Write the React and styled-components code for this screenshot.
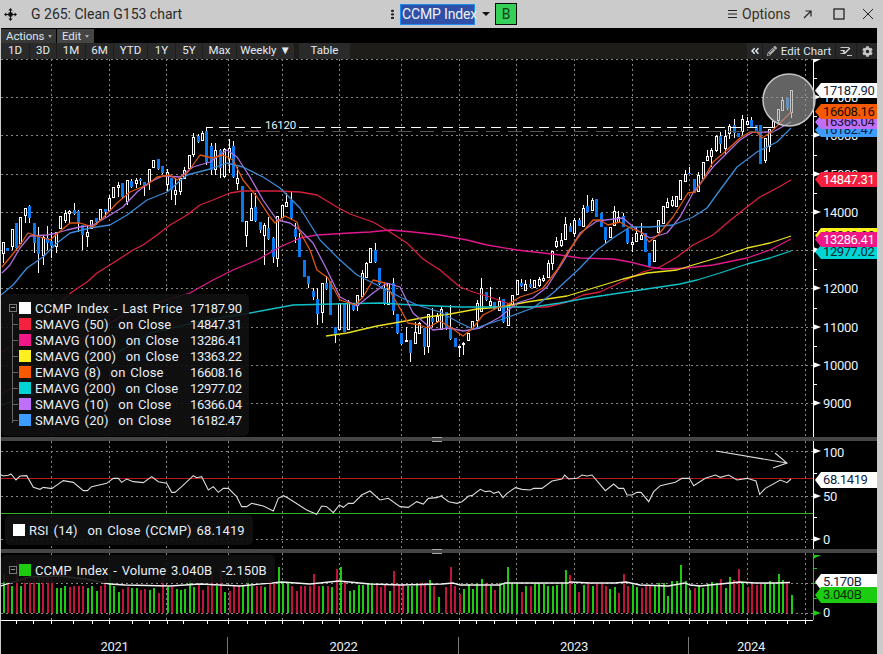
import React from 'react';
import styled, { createGlobalStyle } from 'styled-components';
import { FaCog, FaPencilAlt, FaAngleDoubleLeft } from 'react-icons/fa';

const GlobalStyle = createGlobalStyle`
    html, body { margin: 0; padding: 0; background: #cbcbcb; }
    * { box-sizing: border-box; }
`;

const FONT = `Roboto, "Liberation Sans", Arial, sans-serif`;

// candles traced from the picture: [bodyTop, bodyBottom, high, low, up]
const traceA = [
    [397,430,397,460,1],[413,423,413,423,0],[358,408,358,420,1],[340,415,340,420,0],[322,400,322,400,1],
    [295,315,295,340,1],[288,325,285,340,0],[340,400,340,430,0],[375,433,350,488,0],[382,435,375,465,1],
    [385,400,348,420,0],[393,408,365,445,0],[368,410,368,428,1],[320,355,320,355,1],[310,330,300,340,1],
    [303,310,300,340,1],[300,312,280,315,0],[303,340,300,365,0],[345,375,345,420,0],[367,380,345,410,1],
    [330,355,330,358,1],[325,335,325,345,0],[298,328,298,330,1],[298,306,298,320,0],[265,302,255,305,1],
    [232,262,232,262,1],[227,233,215,262,1],[218,262,218,265,0],[212,275,212,285,1],[212,232,208,235,0],
    [212,220,205,235,1],[208,212,205,225,0],[217,228,217,258,0],[177,218,177,240,1],[150,172,150,172,1],
    [146,178,146,180,0],[167,190,167,192,0],[188,222,178,245,1],[205,240,205,270,0],[240,252,205,285,1],
    [205,245,200,255,1],[182,205,170,208,1],[135,175,135,180,1],[82,132,70,140,1],[78,95,72,100,0],
    [70,90,62,92,1],[63,155,63,165,0],[108,180,100,195,0],[122,178,98,195,1],[120,175,118,205,0],
    [118,200,115,205,1],[115,145,88,190,1],[108,200,92,205,0],[205,220,170,240,1],[228,335,228,335,0],
    [335,375,335,410,1],[295,330,250,333,1],[292,333,250,335,0],[335,360,335,370,0],[345,375,340,465,1],
    [355,387,320,390,0],[385,440,380,458,0],[320,445,320,470,1],[285,322,285,322,1],[278,290,248,292,1],
    [270,325,245,330,0],[357,382,340,400,0],[385,440,370,440,0],
];

const traceB = [
    [210,260,210,262,0],[258,282,258,293,0],[303,322,295,330,0],[327,372,295,405,0],[280,368,280,398,1],
    [280,297,258,300,0],[272,375,272,375,0],[412,435,412,458,0],[340,417,340,420,1],[342,425,342,425,0],
    [338,418,330,420,1],[345,360,340,362,0],[315,345,315,362,1],[250,318,240,320,1],[220,262,215,265,1],
    [175,218,175,220,1],[180,217,158,220,0],[235,282,235,285,0],[295,342,275,345,0],[280,342,280,345,1],
    [280,362,265,375,0],[372,430,372,432,0],[430,462,430,464,0],[450,453,410,455,1],[450,490,450,515,0],
    [427,460,395,462,1],[400,430,395,432,1],[415,472,415,495,0],[372,468,372,490,1],[383,395,355,410,0],
    [380,395,370,400,1],[358,418,350,420,1],[367,418,367,420,0],[415,447,345,449,0],[445,470,445,472,0],
    [470,473,470,500,1],[460,462,455,495,1],[430,452,430,454,1],[395,418,395,420,1],[340,390,330,410,1],
    [295,365,265,367,1],[307,330,307,332,0],[335,345,290,350,1],[335,357,335,359,0],[333,360,320,362,1],
    [328,397,328,399,0],[340,407,340,409,1],[315,342,315,344,1],[270,312,270,314,1],[280,288,268,290,0],
    [284,302,270,304,1],[283,292,268,294,0],[270,292,270,294,1],[268,285,262,290,1],[265,272,255,275,1],
    [220,262,210,264,1],[183,220,183,240,1],[153,170,140,175,1],[150,165,130,170,1],[103,147,82,150,1],
    [108,125,100,127,0],[90,130,85,140,1],[90,107,85,109,0],[55,110,45,112,1],[47,65,15,67,0],
    [30,60,25,62,1],[27,80,27,82,0],
];

const traceC = [
    [308,350,308,352,0],[350,390,350,400,0],[353,383,353,385,1],[303,345,288,347,1],[322,338,303,340,1],
    [317,350,308,352,0],[358,400,358,402,0],[397,403,380,425,1],[370,395,350,397,1],[375,388,340,390,1],
    [368,425,368,427,0],[428,468,428,470,0],[392,453,392,455,1],[330,368,330,370,1],[290,340,290,342,1],
    [278,293,265,295,1],[270,285,258,290,1],[260,290,260,292,1],[212,268,212,270,1],[193,215,180,217,1],
    [190,191,172,192,0],[208,248,208,250,0],[195,243,185,245,1],[157,205,157,207,1],[140,150,120,152,1],
    [120,140,115,170,1],[78,122,75,125,1],[78,103,65,130,0],[78,115,60,135,1],[48,70,42,88,1],
    [45,68,28,85,0],[68,80,68,82,0],[28,65,15,75,1],[33,42,20,44,1],[30,50,20,52,0],
    [45,65,45,67,0],[45,162,45,162,0],[85,150,85,160,1],[58,110,58,125,1],[35,53,35,55,1],
    [-3,30,-3,45,1],[-30,0,-39,2,1],[-37,-6,-37,0,0],[-60,6,-60,24,1],
];

const toCandle = (offset) => ([top, bottom, high, low, up]) => ({
    top: offset + top / 3,
    bottom: offset + bottom / 3,
    high: offset + high / 3,
    low: offset + low / 3,
    up: !!up,
});

const candles = [
    ...traceA.map(toCandle(110)),
    ...traceB.map(toCandle(190)),
    ...traceC.map(toCandle(110)),
].map((c, i) => ({ ...c, x: Math.round(2.67 + i * 4.43) }));

const series = [
    { color: '#d8203c', points: '2,352 27,337 53,310 72,292 87,282 97,273 113,263 133,250 143,245 157,235 170,225 187,215 200,205 213,200 230,193 243,191 277,191 300,192 317,195 337,207 350,214 373,222 390,232 407,243 423,259 440,270 460,287 473,292 490,297 507,303 517,307 547,307 567,302 583,295 600,292 630,278 643,272 660,267 677,257 693,245 713,235 727,223 743,210 760,197 777,188 791,180' },
    { color: '#e0188c', points: '2,393 20,385 43,370 67,347 97,330 133,310 190,293 213,280 233,270 257,260 280,247 300,238 317,235 350,233 370,232 390,230 413,232 440,235 467,240 487,245 517,250 560,255 580,258 613,259 630,262 650,267 663,269 687,268 713,265 747,258 770,250 791,239' },
    { color: '#e8e020', points: '326,336 347,333 377,326 400,322 427,317 450,314 477,309 500,307 527,302 567,296 600,286 623,279 647,273 677,270 693,265 720,257 747,248 770,243 791,236' },
    { color: '#10c0c8', points: '2,405 40,392 73,375 117,353 150,333 207,320 250,313 293,305 333,304 380,303 413,305 460,307 500,307 533,307 560,303 587,298 600,296 680,284 697,280 720,273 747,264 770,258 791,251' },
    { color: '#b070e0', points: '2,273 10,265 20,248 30,236 47,235 57,233 67,230 80,227 93,225 107,217 123,207 137,192 150,182 163,176 180,177 193,167 210,162 227,150 237,157 250,177 263,200 277,220 290,223 300,230 313,243 327,270 340,297 357,306 373,293 387,283 400,287 413,313 433,330 450,328 463,331 480,328 500,317 517,303 533,298 547,287 563,262 580,233 597,221 623,218 637,230 650,238 667,233 680,217 693,193 713,167 727,153 740,140 753,132 773,132 791,122' },
    { color: '#3a8ad8', points: '1,295 13,285 27,268 43,257 57,243 70,233 90,228 110,225 127,215 147,200 167,192 187,175 210,169 227,163 243,167 263,177 280,188 300,208 320,240 340,260 357,275 377,285 400,297 417,305 440,312 460,323 473,329 500,320 533,308 553,293 580,268 597,250 613,238 630,227 650,227 673,225 693,217 707,208 720,190 737,167 757,152 777,142 791,128' },
    { color: '#e05510', points: '2,267 12,255 20,245 28,233 37,236 50,240 58,233 70,223 80,223 93,227 103,218 117,203 130,192 147,185 157,177 170,175 177,180 188,172 200,155 212,158 223,155 233,160 243,180 257,197 270,217 275,223 285,216 297,222 300,232 310,250 317,270 328,278 340,300 355,305 363,297 373,280 385,283 397,303 408,323 420,325 427,328 440,321 450,327 463,336 473,328 483,315 497,308 507,305 520,297 533,293 543,288 557,270 567,253 580,235 593,220 600,220 608,225 620,222 630,228 643,233 649,242 658,235 673,217 688,193 695,192 703,180 713,162 727,150 740,138 750,132 757,132 762,138 770,133 780,123 791,112' },
];

const rsiLeft = [[0,133],[10,138],[25,136],[33,132],[48,150],[60,138],[80,137],[100,172],[120,178],[130,172],[155,176],[190,152],[220,157],[250,182],[262,182],[275,170],[320,160],[340,145],[355,145],[365,157],[380,147],[400,155],[430,158],[455,140],[475,155],[500,160],[515,187],[525,187],[545,170],[580,137],[590,143],[605,140],[625,180],[640,170],[655,187],[670,175],[685,175],[710,200],[725,230],[740,230],[755,220],[790,228],[820,243],[835,205],[850,197],[865,205],[920,240],[950,253],[965,228],[980,230],[1000,248],[1018,225],[1030,232],[1045,220],[1060,220],[1085,195],[1110,183],[1140,210],[1165,205],[1200,230],[1225,232],[1250,215],[1270,222],[1285,205],[1310,203],[1326,197]];
const rsiRight = [[0,200],[20,215],[45,220],[60,215],[80,198],[90,197],[115,178],[130,185],[145,183],[155,190],[170,185],[183,203],[195,190],[220,173],[240,178],[265,180],[275,175],[300,175],[330,153],[360,147],[368,135],[380,147],[405,145],[420,135],[435,138],[450,135],[490,182],[515,162],[530,175],[545,175],[555,195],[570,195],[585,187],[597,187],[620,215],[635,185],[655,167],[700,157],[720,145],[742,145],[755,167],[790,145],[820,135],[835,142],[860,135],[885,150],[915,145],[942,153],[953,193],[970,175],[1015,150],[1035,158],[1047,147]];
const rsiPoints = [
    ...rsiLeft.map(([x, y]) => `${x / 3},${430 + y / 3}`),
    ...rsiRight.map(([x, y]) => `${442 + x / 3},${430 + y / 3}`),
].join(' ');

// volume bars: [x in crop, colour, top in crop]
const volLeft = [[8,'g',432],[21,'r',438],[33,'g',468],[47,'r',390],[60,'g',468],[73,'r',400],[87,'r',453],[100,'r',440],[113,'g',440],[127,'r',430],[140,'r',440],[153,'r',440],[167,'g',473],[180,'g',473],[193,'g',468],[207,'r',470],[220,'r',468],[233,'r',468],[247,'r',468],[260,'g',473],[273,'g',468],[287,'g',483],[300,'r',468],[313,'r',443],[327,'g',430],[340,'g',468],[353,'g',485],[367,'r',477],[380,'r',472],[393,'g',473],[407,'g',473],[420,'r',480],[433,'r',478],[447,'g',480],[460,'g',475],[473,'r',488],[487,'r',435],[500,'g',470],[513,'r',470],[527,'g',478],[540,'g',480],[553,'g',478],[567,'g',450],[580,'g',472],[593,'r',462],[607,'r',480],[620,'r',468],[633,'r',435],[647,'g',468],[660,'r',418],[673,'g',486],[687,'r',482],[700,'r',468],[713,'r',468],[727,'g',468],[740,'g',445],[753,'g',468],[767,'r',468],[780,'r',468],[793,'g',472],[807,'r',447],[820,'r',460],[833,'g',410],[847,'g',455],[860,'g',457],[873,'r',467],[887,'r',483],[900,'r',468],[913,'r',468],[927,'r',468],[940,'r',432],[953,'r',468],[967,'g',468],[980,'r',468],[993,'g',470],[1007,'r',417],[1020,'g',410],[1033,'r',455],[1047,'g',483],[1060,'g',480],[1073,'g',465],[1087,'g',465],[1100,'g',458],[1113,'g',458],[1127,'r',465],[1140,'r',472],[1153,'r',465],[1167,'g',483],[1180,'r',423],[1193,'r',465],[1207,'r',463],[1220,'g',468],[1233,'g',468],[1247,'g',465],[1260,'r',458],[1273,'r',458],[1287,'g',450],[1300,'r',468],[1313,'g',500]];
const volRight = [[8,'r',470],[24,'r',410],[36,'r',467],[50,'r',492],[63,'g',477],[77,'g',462],[90,'g',477],[103,'g',460],[116,'g',447],[129,'r',460],[143,'g',468],[156,'r',480],[170,'g',460],[183,'g',460],[195,'g',410],[208,'g',460],[222,'g',462],[236,'r',485],[249,'g',468],[263,'r',468],[276,'g',460],[289,'g',458],[303,'g',462],[316,'g',468],[329,'g',468],[342,'g',464],[356,'g',462],[369,'g',420],[382,'r',435],[396,'g',462],[408,'r',486],[422,'g',465],[435,'r',456],[449,'g',468],[462,'r',460],[476,'r',460],[489,'r',468],[502,'g',477],[516,'g',470],[529,'r',490],[543,'r',432],[556,'r',468],[570,'g',465],[583,'g',470],[596,'r',473],[609,'r',466],[621,'r',466],[635,'g',468],[649,'g',460],[662,'g',460],[675,'g',497],[688,'g',453],[702,'g',453],[715,'g',405],[728,'g',453],[741,'g',480],[755,'r',473],[768,'g',465],[781,'g',473],[795,'g',463],[808,'g',456],[821,'g',460],[834,'r',447],[848,'g',473],[861,'g',440],[874,'r',450],[887,'r',417],[900,'g',458],[914,'r',472],[927,'r',462],[941,'r',465],[953,'r',460],[967,'g',460],[980,'g',453],[993,'g',460],[1007,'g',432],[1020,'g',450],[1033,'r',458],[1047,'g',495]];
const volumeBars = [
    ...volLeft.map(([x, c, top]) => ({ x: Math.round(x / 3), c, top: 430 + top / 3 })),
    ...volRight.map(([x, c, top]) => ({ x: Math.round(442 + x / 3), c, top: 430 + top / 3 })),
];
const volumeAvg = '1,586 10,583 30,577 60,576 85,579 110,584 125,585 170,586 200,584 240,586 282,582 310,584 339,581 370,584 401,585 442,584 453,583 460,585 500,585 505,583 525,583 568,583 570,582 590,583 615,583 626,582 640,585 668,586 685,583 690,585 700,586 720,584 740,582 755,583 775,583 790,582.5';

const gridX = [51, 109, 166, 228, 282, 339, 401, 459, 516, 574, 632, 689, 747, 805];
const priceLines = [97, 135, 174, 212, 250, 288, 327, 365, 403];
const priceLabels = [['17000', 97], ['16000', 135], ['15000', 174], ['14000', 212], ['13000', 250], ['12000', 288], ['11000', 327], ['10000', 365], ['9000', 403]];
const timeTicks = [16, 33, 51, 73, 92, 109, 132, 149, 167, 183, 207, 228, 247, 265, 282, 303, 322, 339, 362, 385, 401, 423, 459, 476, 494, 516, 535, 553, 574, 593, 609, 632, 649, 668, 689, 707, 726, 747, 765, 787, 805];

const legendRows = [
    ['#ffffff', 'CCMP Index - Last Price', '17187.90'],
    ['#f5203c', 'SMAVG (50)  on Close', '14847.31'],
    ['#f01888', 'SMAVG (100)  on Close', '13286.41'],
    ['#fff020', 'SMAVG (200)  on Close', '13363.22'],
    ['#f55a00', 'EMAVG (8)  on Close', '16608.16'],
    ['#00d4d4', 'EMAVG (200)  on Close', '12977.02'],
    ['#c070f8', 'SMAVG (10)  on Close', '16366.04'],
    ['#3d9cff', 'SMAVG (20)  on Close', '16182.47'],
];

// painted in this order: later tags cover earlier ones, as on the terminal
const priceTags = [
    { y: 83, h: 15, bg: '#ffffff', fg: '#10233f', text: '17187.90' },
    { y: 123, h: 14, bg: '#3d9cff', fg: '#08203f', text: '16182.47' },
    { y: 115, h: 14, bg: '#c070f8', fg: '#1a1030', text: '16366.04' },
    { y: 104, h: 15, bg: '#f55a00', fg: '#1a0a00', text: '16608.16' },
    { y: 172, h: 15, bg: '#f5203c', fg: '#ffffff', text: '14847.31' },
    { y: 228, h: 15, bg: '#fff020', fg: '#222200', text: '13363.22' },
    { y: 245, h: 14, bg: '#00d4d4', fg: '#04282c', text: '12977.02' },
    { y: 232, h: 15, bg: '#f01888', fg: '#ffffff', text: '13286.41' },
];

const volumeTags = [
    { y: 574, h: 16, bg: '#ffffff', fg: '#10233f', text: '5.170B' },
    { y: 587, h: 16, bg: '#1ccc10', fg: '#063006', text: '3.040B' },
];

const Window = styled.div`
    width: 883px;
    height: 654px;
    display: flex;
    flex-direction: column;
    overflow: hidden;
    background: #cbcbcb;
    font-family: ${FONT};
`;

const TitleBar = styled.header`
    height: 28px;
    flex: none;
    display: flex;
    align-items: center;
    color: #2a2a2a;
    font-size: 14px;
`;

const MoveIcon = styled.svg`
    width: 13px;
    height: 13px;
    margin: 0 14px 0 4px;
`;

const Title = styled.span`
    width: 358px;
    white-space: nowrap;
`;

const Grip = styled.span`
    width: 7px;
    height: 10px;
    margin-right: 4px;
    background: radial-gradient(circle, #222 1.2px, transparent 1.4px) center top / 3px 3.6px repeat-y;
`;

const TickerInput = styled.div`
    width: 75px;
    height: 21px;
    background: #3050a8;
    border: 1px solid #1b8cf0;
    color: #f2f2f2;
    line-height: 19px;
    padding-left: 1px;
    white-space: nowrap;
    letter-spacing: -0.15px;
`;

const Caret = styled.span`
    width: 0;
    height: 0;
    margin: 0 5px 0 7px;
    border-left: 4px solid transparent;
    border-right: 4px solid transparent;
    border-top: 4px solid #111;
`;

const StatusButton = styled.span`
    width: 22px;
    height: 22px;
    background: #34d058;
    border: 1px solid #0a0a0a;
    display: flex;
    align-items: center;
    justify-content: center;
    color: #14401f;
`;

const WindowTools = styled.div`
    margin-left: auto;
    display: flex;
    align-items: center;
    color: #3a3020;
`;

const ToolIcon = styled.svg`
    width: 12px;
    height: 12px;
    margin-left: ${(p) => p.$gap}px;
    margin-right: ${(p) => p.$end || 0}px;
`;

const OptionsLabel = styled.span`
    width: 47px;
    margin-left: 5px;
    white-space: nowrap;
`;

const ActionsRow = styled.div`
    height: 15px;
    flex: none;
    display: flex;
    gap: 1px;
    margin: 0 6px 0 1px;
    background: #000;
`;

const MenuButton = styled.span`
    width: ${(p) => p.$w}px;
    height: 14px;
    margin-top: 1px;
    padding-left: 5px;
    background: ${(p) => p.$bg};
    color: #d8e4ee;
    font-size: 11.5px;
    letter-spacing: -0.1px;
    white-space: nowrap;
    display: flex;
    gap: 4px;
    align-items: center;
    &::after {
        content: '';
        border-left: 2.5px solid transparent;
        border-right: 2.5px solid transparent;
        border-top: 3px solid #aaa;
    }
`;

const TabRow = styled.nav`
    height: 16px;
    flex: none;
    display: flex;
    margin: 0 6px 0 1px;
    background: #1f1d1a;
`;

const Tab = styled.span`
    width: ${(p) => p.$w}px;
    margin-right: ${(p) => p.$after || 1}px;
    background: #2a2a2a;
    color: #e4ecf2;
    font-size: 11.5px;
    line-height: 15px;
    text-align: center;
    white-space: nowrap;
`;

const ChartTools = styled.div`
    margin-left: auto;
    display: flex;
    height: 100%;
`;

const ChartTool = styled.span`
    width: ${(p) => p.$w}px;
    margin-left: 1px;
    background: #272727;
    color: #dce6ee;
    font-size: 11.5px;
    display: flex;
    align-items: center;
    justify-content: center;
    gap: 4px;
    white-space: nowrap;
`;

const ChartArea = styled.main`
    flex: 1;
    display: flex;
    flex-direction: column;
    margin: 0 6px 0 1px;
    background: #000;
    min-height: 0;
`;

const Panel = styled.section`
    position: relative;
    height: ${(p) => p.$h}px;
    flex: none;
    svg.plot {
        display: block;
    }
`;

const Divider = styled.div`
    height: 4px;
    flex: none;
    background: #454545;
    position: relative;
    &::after {
        content: '';
        position: absolute;
        left: ${(p) => p.$grip}px;
        top: 0;
        width: 10px;
        height: 3px;
        border-top: 1px solid #aaa;
        border-bottom: 1px solid #aaa;
    }
`;

const AxisText = styled.text`
    fill: #eaf2fa;
    font-family: ${FONT};
    font-size: ${(p) => p.$size || 13}px;
    letter-spacing: -0.3px;
`;

const ValueTag = styled.div`
    position: absolute;
    left: 814px;
    top: ${(p) => p.$top}px;
    width: 62px;
    height: ${(p) => p.$h}px;
    background: ${(p) => p.$bg};
    color: ${(p) => p.$fg};
    font-size: 13px;
    letter-spacing: -0.4px;
    line-height: ${(p) => p.$h}px;
    padding-left: 8px;
    white-space: nowrap;
    overflow: hidden;
    clip-path: polygon(0 50%, 6px 0, 100% 0, 100% 100%, 6px 100%);
`;

const Legend = styled.div`
    position: absolute;
    left: ${(p) => p.$left}px;
    top: ${(p) => p.$top}px;
    width: ${(p) => p.$w}px;
    height: ${(p) => p.$h}px;
    padding: ${(p) => p.$pad};
    background: rgba(17, 17, 17, 0.9);
    border-radius: 5px;
    color: #e6eef6;
    font-size: 13px;
`;

const CollapseBox = styled.span`
    position: absolute;
    left: 8px;
    top: ${(p) => p.$top}px;
    width: 8px;
    height: 8px;
    border: 1px solid #777;
    &::before {
        content: '';
        position: absolute;
        left: 1px;
        top: 2px;
        width: 4px;
        height: 1px;
        background: #999;
    }
`;

const TreeLine = styled.span`
    position: absolute;
    left: 11px;
    top: 19px;
    width: 1px;
    height: 110px;
    background: #666;
`;

const LegendRow = styled.div`
    position: relative;
    height: 16px;
    display: flex;
    align-items: center;
    white-space: pre;
    &::before {
        content: '';
        position: absolute;
        left: -7px;
        top: 8px;
        width: ${(p) => (p.$stub ? 6 : 0)}px;
        height: 1px;
        background: #666;
    }
`;

const Swatch = styled.span`
    width: 12px;
    height: 12px;
    flex: none;
    margin-right: 4px;
    background: ${(p) => p.$color};
`;

const LegendLabel = styled.span`
    width: 155px;
    letter-spacing: 0.12px;
    word-spacing: 1.5px;
`;

const LegendValue = styled.span`
    letter-spacing: -0.35px;
`;

const InlineLabel = styled.span`
    letter-spacing: ${(p) => p.$spacing}px;
    word-spacing: 1.5px;
`;

const TimeAxis = styled.footer`
    flex: 1;
    display: flex;
`;

const YearCell = styled.div`
    position: relative;
    width: ${(p) => p.$w}px;
    display: flex;
    align-items: flex-end;
    justify-content: center;
    color: #e6eef6;
    font-size: 13px;
    letter-spacing: -0.3px;
    line-height: 15px;
    &::after {
        content: '';
        display: ${(p) => (p.$edge ? 'block' : 'none')};
        position: absolute;
        right: 0;
        top: 12px;
        bottom: 0;
        width: 1px;
        background: #777;
    }
`;

const Grid = ({ lines, top, bottom }) => (
    <g stroke="#858585" strokeDasharray="2 3" shapeRendering="crispEdges">
        {lines.map((y) => <line key={y} x1="1" x2="813" y1={y + 0.5} y2={y + 0.5} />)}
        {gridX.map((x) => <line key={x} x1={x + 0.5} x2={x + 0.5} y1={top} y2={bottom} />)}
    </g>
);

const TickMark = ({ y, color = '#fff' }) => (
    <polygon points={`813,${y - 3} 813,${y + 3} 821,${y}`} fill={color} />
);

const MinorTick = ({ y, color = '#fff' }) => (
    <line x1="813" x2="817" y1={y + 0.5} y2={y + 0.5} stroke={color} shapeRendering="crispEdges" />
);

const Candle = ({ c }) => (
    <g shapeRendering="crispEdges">
        <line x1={c.x + 0.5} x2={c.x + 0.5} y1={c.high} y2={c.low} stroke="#fff" />
        {c.up
            ? <rect x={c.x - 0.5} y={c.top} width="2" height={Math.max(c.bottom - c.top, 1)} fill="#000" stroke="#fff" />
            : <rect x={c.x - 1} y={c.top} width="3" height={Math.max(c.bottom - c.top, 1)} fill="#0a78ee" />}
    </g>
);

const PriceChart = () => (
    <svg className="plot" width="876" height="378" viewBox="1 59 876 378">
        <Grid lines={[59, ...priceLines]} top={59} bottom={437} />
        <line x1="813.5" x2="813.5" y1="59" y2="437" stroke="#fff" shapeRendering="crispEdges" />
        <polygon points="813,59 821,59 813,63" fill="#fff" />
        {priceLabels.map(([text, y]) => (
            <g key={text}>
                <TickMark y={y} />
                <MinorTick y={y - 19} />
                <AxisText x="823" y={y + 5}>{text}</AxisText>
            </g>
        ))}
        {candles.map((c, i) => <Candle key={i} c={c} />)}
        {series.map((s) => (
            <polyline key={s.color} points={s.points} fill="none" stroke={s.color} strokeWidth="1.3" strokeLinejoin="round" />
        ))}
        <path d="M206.5 131V127.5H775" fill="none" stroke="#fff" strokeDasharray="10 6" shapeRendering="crispEdges" />
        <line x1="222" x2="775" y1="131.5" y2="131.5" stroke="#555" strokeDasharray="14 8" shapeRendering="crispEdges" />
        <rect x="264" y="119" width="32" height="12" fill="#000" />
        <AxisText x="265" y="129" $size={11.5}>16120</AxisText>
        <circle cx="789" cy="100" r="26" fill="#a0a0a0" fillOpacity="0.62" stroke="#c4c4c4" strokeWidth="1.5" />
    </svg>
);

const RsiChart = () => (
    <svg className="plot" width="876" height="108" viewBox="1 441 876 108">
        <Grid lines={[451, 496, 539]} top={441} bottom={549} />
        <line x1="813.5" x2="813.5" y1="441" y2="549" stroke="#fff" shapeRendering="crispEdges" />
        <line x1="1" x2="813" y1="478.5" y2="478.5" stroke="#b81818" shapeRendering="crispEdges" />
        <line x1="1" x2="813" y1="513.5" y2="513.5" stroke="#2fb424" shapeRendering="crispEdges" />
        <polyline points={rsiPoints} fill="none" stroke="#dcdcdc" strokeWidth="1.1" />
        <path d="M716 451L787 463M775 453L787 463L773 468" fill="none" stroke="#dcdcdc" strokeWidth="1.1" />
        <TickMark y={451} />
        <TickMark y={496} />
        <TickMark y={539} />
        <MinorTick y={473} />
        <MinorTick y={517} />
        <AxisText x="823" y="457">100</AxisText>
        <AxisText x="823" y="501">50</AxisText>
        <AxisText x="823" y="544">0</AxisText>
    </svg>
);

const VolumeChart = () => (
    <svg className="plot" width="876" height="72" viewBox="1 553 876 72">
        <Grid lines={[583, 613]} top={553} bottom={620} />
        {volumeBars.map((b, i) => (
            <rect key={i} x={b.x} y={b.top} width="2.4" height={613 - b.top} fill={b.c === 'g' ? '#1ccc10' : '#c0143c'} shapeRendering="crispEdges" />
        ))}
        <polyline points={volumeAvg} fill="none" stroke="#f2f2f2" strokeWidth="1.3" />
        <line x1="813.5" x2="813.5" y1="553" y2="620" stroke="#1ccc10" shapeRendering="crispEdges" />
        <polygon points="813,555 821,555 813,559" fill="#1ccc10" />
        <MinorTick y={568} color="#1ccc10" />
        <MinorTick y={583} color="#1ccc10" />
        <MinorTick y={598} color="#1ccc10" />
        <TickMark y={613} color="#1ccc10" />
        <AxisText x="823" y="617">0</AxisText>
        <g stroke="#fff" shapeRendering="crispEdges">
            <line x1="1" x2="813" y1="620.5" y2="620.5" />
            {timeTicks.map((x) => <line key={x} x1={x + 0.5} x2={x + 0.5} y1="620" y2="624" />)}
        </g>
    </svg>
);

const App = () => (
    <Window>
        <GlobalStyle />
        <TitleBar>
            <MoveIcon viewBox="0 0 13 13">
                <path d="M6.5 0L8.6 2.4H4.4ZM6.5 13L4.4 10.6H8.6ZM0 6.5L2.4 4.4V8.6ZM13 6.5L10.6 8.6V4.4Z" fill="#111" />
                <path d="M6.5 2V11M2 6.5H11" stroke="#111" strokeWidth="1" />
                <circle cx="6.5" cy="6.5" r="2.4" fill="#111" />
            </MoveIcon>
            <Title>G 265: Clean G153 chart</Title>
            <Grip />
            <TickerInput>CCMP Index</TickerInput>
            <Caret />
            <StatusButton>B</StatusButton>
            <WindowTools>
                <ToolIcon $gap={0} viewBox="0 0 12 12">
                    <path d="M3 2.5H12M3 6H12M3 9.5H12" stroke="#222" strokeWidth="1.2" fill="none" />
                </ToolIcon>
                <OptionsLabel>Options</OptionsLabel>
                <ToolIcon $gap={12} viewBox="0 0 12 12">
                    <path d="M3 10L9.5 3.5M4.5 3H10V8.5" stroke="#222" strokeWidth="1.2" fill="none" />
                </ToolIcon>
                <ToolIcon $gap={20} viewBox="0 0 12 12">
                    <rect x="1" y="1" width="10" height="10" stroke="#222" strokeWidth="1.3" fill="none" />
                </ToolIcon>
                <ToolIcon $gap={17} $end={9} viewBox="0 0 12 12">
                    <path d="M1 1L11 11M11 1L1 11" stroke="#222" strokeWidth="1" fill="none" />
                </ToolIcon>
            </WindowTools>
        </TitleBar>
        <ActionsRow>
            <MenuButton $w={55} $bg="#383838">Actions</MenuButton>
            <MenuButton $w={37} $bg="#454545">Edit</MenuButton>
        </ActionsRow>
        <TabRow>
            <Tab $w={28}>1D</Tab>
            <Tab $w={26}>3D</Tab>
            <Tab $w={28}>1M</Tab>
            <Tab $w={27}>6M</Tab>
            <Tab $w={33}>YTD</Tab>
            <Tab $w={27}>1Y</Tab>
            <Tab $w={26}>5Y</Tab>
            <Tab $w={33}>Max</Tab>
            <Tab $w={57} $after={5}>Weekly ▼</Tab>
            <Tab $w={51}>Table</Tab>
            <ChartTools>
                <ChartTool $w={15}><FaAngleDoubleLeft size={10} /></ChartTool>
                <ChartTool $w={72}><FaPencilAlt size={10} color="#b0b0b0" />Edit Chart</ChartTool>
                <ChartTool $w={20}>
                    <svg width="12" height="10" viewBox="0 0 12 10">
                        <path d="M0.5 1.5H9M0.5 4.5H5M0.5 7.5H5M7 9.5H12" stroke="#c8c8c8" fill="none" />
                        <path d="M3 5L5 7L10 2" stroke="#e8e8e8" strokeWidth="1.3" fill="none" />
                    </svg>
                </ChartTool>
                <ChartTool $w={20}><FaCog size={11} color="#c8c8c8" /></ChartTool>
            </ChartTools>
        </TabRow>
        <ChartArea>
            <Panel $h={378}>
                <PriceChart />
                {priceTags.map((t) => (
                    <ValueTag key={t.text} $top={t.y - 59} $h={t.h} $bg={t.bg} $fg={t.fg}>{t.text}</ValueTag>
                ))}
                <Legend $left={0} $top={235} $w={248} $h={142} $pad="6px 0 0 18px">
                    <CollapseBox $top={10} />
                    <TreeLine />
                    {legendRows.map(([color, label, value], i) => (
                        <LegendRow key={label} $stub={i > 0}>
                            <Swatch $color={color} />
                            <LegendLabel>{label}</LegendLabel>
                            <LegendValue>{value}</LegendValue>
                        </LegendRow>
                    ))}
                </Legend>
            </Panel>
            <Divider $grip={431} />
            <Panel $h={108}>
                <RsiChart />
                <ValueTag $top={31} $h={16} $bg="#ffffff" $fg="#10233f">68.1419</ValueTag>
                <Legend $left={4} $top={74} $w={248} $h={30} $pad="7px 0 0 8px">
                    <LegendRow>
                        <Swatch $color="#ffffff" />
                        <InlineLabel $spacing={0.14}>RSI (14)  on Close (CCMP) 68.1419</InlineLabel>
                    </LegendRow>
                </Legend>
            </Panel>
            <Divider $grip={431} />
            <Panel $h={72}>
                <VolumeChart />
                {volumeTags.map((t) => (
                    <ValueTag key={t.text} $top={t.y - 553} $h={t.h} $bg={t.bg} $fg={t.fg}>{t.text}</ValueTag>
                ))}
                <Legend $left={0} $top={2} $w={274} $h={28} $pad="7px 0 0 18px">
                    <CollapseBox $top={11} />
                    <LegendRow>
                        <Swatch $color="#1ccc10" />
                        <InlineLabel $spacing={0.08}>CCMP Index - Volume 3.040B  -2.150B</InlineLabel>
                    </LegendRow>
                </Legend>
            </Panel>
            <TimeAxis>
                <YearCell $w={227} $edge>2021</YearCell>
                <YearCell $w={231} $edge>2022</YearCell>
                <YearCell $w={230} $edge>2023</YearCell>
                <YearCell $w={124}>2024</YearCell>
            </TimeAxis>
        </ChartArea>
    </Window>
);

export default App;
